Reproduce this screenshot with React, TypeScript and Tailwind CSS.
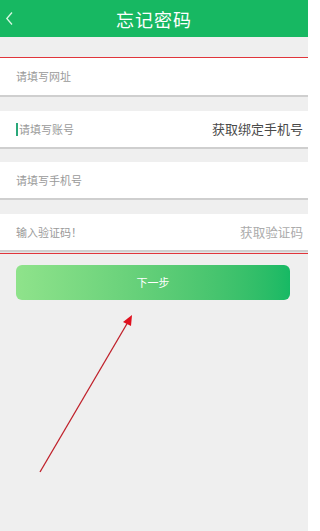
import React from "react";

const font = { fontFamily: '"Noto Sans CJK SC", "Noto Sans", sans-serif' };

function Row({ placeholder, right, rightClass, caret }: { placeholder: string; right?: string; rightClass?: string; caret?: boolean }) {
  return (
    <div className="flex h-[38px] items-center justify-between bg-white pl-[16px] pr-[5px] border-b-2 border-[#cfcfcf]">
      <div className="flex items-center text-[11px] text-[#9a9a9a]">
        {caret && <span className="mr-[1px] inline-block h-[13px] w-[2px] bg-[#2aa87a]" />}
        {placeholder}
      </div>
      {right && <div className={rightClass}>{right}</div>}
    </div>
  );
}

export default function App() {
  return (
    <div className="relative h-[531px] w-[308px] overflow-hidden bg-[#efefef]" style={font}>
      <div className="relative flex h-[37px] items-center justify-center bg-[#17b862]">
        <svg className="absolute left-[5px] top-[11px]" width="9" height="15" viewBox="0 0 9 15">
          <path d="M7 1.5 L1.8 7.5 L7 13.5" fill="none" stroke="#d8f7e2" strokeWidth="1.3" />
        </svg>
        <span className="text-[18px] leading-none text-white tracking-[1px]">忘记密码</span>
      </div>
      <div className="h-[20px]" />
      <div className="h-[1px] bg-[#e0353b]" />
      <div className="flex h-[39px] items-center bg-white pl-[16px] border-b-2 border-[#cfcfcf] text-[11px] text-[#9a9a9a]">
        请填写网址
      </div>
      <div className="h-[14px]" />
      <Row placeholder="请填写账号" caret right="获取绑定手机号" rightClass="text-[13px] text-[#4a4a4a]" />
      <div className="h-[13px]" />
      <Row placeholder="请填写手机号" />
      <div className="h-[14px]" />
      <Row placeholder="输入验证码！" right="获取验证码" rightClass="text-[12.6px] text-[#ababab]" />
      <div className="h-[1px] bg-[#e6e6e6]" />
      <div className="h-[1px] bg-[#e0353b]" />
      <div className="mx-[16px] mt-[11px] w-[274px]">
        <div className="flex h-[35px] items-center justify-center rounded-[6px] bg-gradient-to-r from-[#8fe38b] to-[#16b964] text-[11px] text-white">
          下一步
        </div>
      </div>
      <svg className="absolute left-0 top-0" width="308" height="531" viewBox="0 0 308 531">
        <line x1="40" y1="472" x2="128" y2="322" stroke="#c0202a" strokeWidth="1.3" />
        <polygon points="132,315 123,322 131,326" fill="#e0101e" />
      </svg>
    </div>
  );
}
